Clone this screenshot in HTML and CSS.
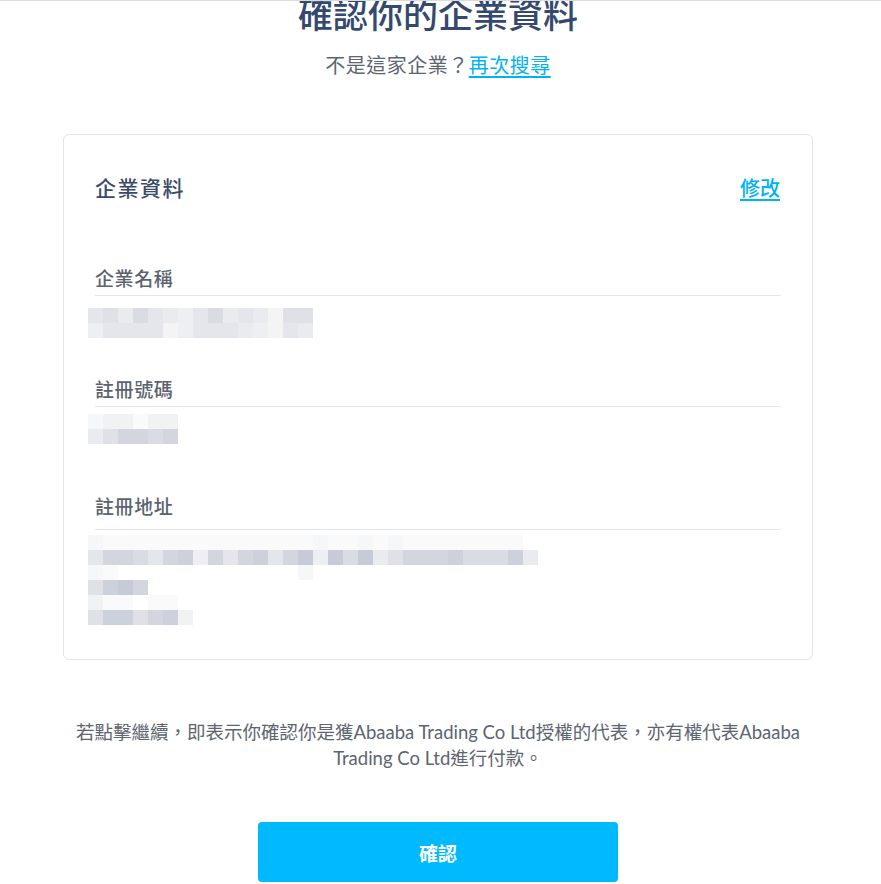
FILE: index.html
```html
<!DOCTYPE html>
<html lang="zh-Hant">
<head>
<meta charset="utf-8">
<title>確認你的企業資料</title>
<link rel="stylesheet" href="styles.css">
</head>
<body>
<div class="page">
  <h1 class="title">確認你的企業資料</h1>
  <p class="subtitle">不是這家企業？<a href="#" class="link">再次搜尋</a></p>

  <section class="card">
    <div class="card-head">
      <h2 class="card-title">企業資料</h2>
      <a href="#" class="link edit">修改</a>
    </div>

    <div class="field field-name">
      <div class="label">企業名稱</div>
      <div class="blur blur-name">
        <div class="brow"><i class="p3"></i><i class="p4"></i><i class="p2"></i><i class="p5"></i><i class="p3"></i><i class="p2"></i><i class="p1"></i><i class="p3"></i><i class="p5"></i><i class="p2"></i><i class="p3"></i><i class="p2"></i><i class="p0"></i><i class="p4"></i><i class="p4"></i></div>
        <div class="brow"><i class="p1"></i><i class="p3"></i><i class="p3"></i><i class="p3"></i><i class="p3"></i><i class="p0"></i><i class="p1"></i><i class="p3"></i><i class="p3"></i><i class="p3"></i><i class="p2"></i><i class="p1"></i><i class="p0"></i><i class="p3"></i><i class="p2"></i></div>
      </div>
    </div>

    <div class="field field-number">
      <div class="label">註冊號碼</div>
      <div class="blur">
        <div class="brow"><i class="f1"></i><i class="f2"></i><i class="f2"></i><i class="f0"></i><i class="f2"></i><i class="f2"></i></div>
        <div class="brow"><i class="p2"></i><i class="p4"></i><i class="p6"></i><i class="p6"></i><i class="p5"></i><i class="p6"></i></div>
      </div>
    </div>

    <div class="field">
      <div class="label label-address">註冊地址</div>
      <div class="blur blur-address">
        <div class="brow"><i class="f1"></i><i class="f0"></i><i class="f0"></i><i class="f0"></i><i class="f0"></i><i class="f0"></i><i class="f0"></i><i class="f0"></i><i class="f0"></i><i class="f0"></i><i class="f0"></i><i class="f0"></i><i class="f0"></i><i class="f0"></i><i class="f0"></i><i class="f1"></i><i class="f0"></i><i class="f0"></i><i class="f1"></i><i class="f0"></i><i class="f1"></i><i class="f0"></i><i class="f0"></i><i class="f0"></i><i class="f0"></i><i class="f0"></i><i class="f0"></i><i class="f0"></i><i class="f0"></i><i class="w"></i></div>
        <div class="brow"><i class="p3"></i><i class="p6"></i><i class="p6"></i><i class="p5"></i><i class="p3"></i><i class="p6"></i><i class="p7"></i><i class="p1"></i><i class="p6"></i><i class="p3"></i><i class="p6"></i><i class="p7"></i><i class="p3"></i><i class="p6"></i><i class="p8"></i><i class="p1"></i><i class="p8"></i><i class="p5"></i><i class="p8"></i><i class="p2"></i><i class="p4"></i><i class="p6"></i><i class="p6"></i><i class="p6"></i><i class="p7"></i><i class="p5"></i><i class="p5"></i><i class="p5"></i><i class="p7"></i><i class="p2"></i></div>
        <div class="brow"><i class="f1"></i><i class="f0"></i><i class="w"></i><i class="w"></i><i class="w"></i><i class="w"></i><i class="w"></i><i class="w"></i><i class="w"></i><i class="w"></i><i class="w"></i><i class="w"></i><i class="w"></i><i class="w"></i><i class="f1"></i></div>
        <div class="brow"><i class="p4"></i><i class="p7"></i><i class="p8"></i><i class="p6"></i></div>
        <div class="brow"><i class="f2"></i><i class="f0"></i><i class="f0"></i><i class="w"></i><i class="f0"></i><i class="f0"></i><i class="w"></i></div>
        <div class="brow"><i class="p4"></i><i class="p7"></i><i class="p7"></i><i class="p4"></i><i class="p6"></i><i class="p7"></i><i class="f2"></i></div>
      </div>
    </div>
  </section>

  <p class="notice">若點擊繼續，即表示你確認你是獲Abaaba Trading Co Ltd授權的代表，亦有權代表Abaaba Trading Co Ltd進行付款。</p>

  <button class="confirm" type="button">確認</button>
</div>
</body>
</html>
```

FILE: styles.css
```css
* { box-sizing: border-box; }

html, body {
  margin: 0;
  padding: 0;
  background: #ffffff;
}

body {
  font-family: Lato, "Noto Sans CJK TC", "Noto Sans", sans-serif;
  color: #5d6570;
  border-top: 1px solid #dcdcdc;
  overflow: hidden;
}

.page {
  width: 876px;
  display: flex;
  flex-direction: column;
  align-items: center;
}

.title {
  margin: -13px 0 0;
  font-size: 35px;
  line-height: 52px;
  font-weight: 500;
  color: #34496f;
  text-align: center;
}

.subtitle {
  margin: 11px 0 0;
  font-size: 20px;
  line-height: 28px;
  color: #5d6570;
  letter-spacing: 0.5px;
}

.link {
  color: #00b3f2;
  text-decoration: underline;
  text-underline-offset: 3px;
  text-decoration-thickness: 2px;
}

.card {
  margin-top: 55px;
  width: 750px;
  border: 1px solid #e2e5e9;
  border-radius: 6px;
  padding: 38px 31px 34px;
}

.card-head {
  display: flex;
  justify-content: space-between;
  align-items: center;
  margin-bottom: 62px;
}

.card-title {
  margin: 0;
  font-size: 21px;
  line-height: 30px;
  font-weight: 500;
  color: #3b4a69;
  letter-spacing: 1.5px;
}

.edit {
  font-size: 20px;
  line-height: 30px;
  font-weight: 500;
  margin-right: 1px;
}

.field { margin-bottom: 49px; }
.field-name { margin-bottom: 38px; }
.field:last-child { margin-bottom: 0; }

.label {
  font-size: 19px;
  line-height: 28px;
  font-weight: 500;
  color: #5b636e;
  letter-spacing: 0.6px;
  padding-bottom: 2px;
  border-bottom: 1px solid #e3e6ea;
}
.label-address { padding-bottom: 8px; }

.blur {
  margin: 7px 0 0 -7px;
  display: flex;
  flex-direction: column;
}
.blur-name { margin-top: 12px; }
.blur-address { margin-top: 5px; }

.brow { display: flex; }
.brow i {
  display: block;
  width: 15px;
  height: 15px;
}

.w  { background: #ffffff; }
.f0 { background: #fafafb; }
.f1 { background: #f6f7f8; }
.f2 { background: #f1f2f4; }
.p0 { background: #f4f4f5; }
.p1 { background: #eeeff2; }
.p2 { background: #e9ebef; }
.p3 { background: #e5e6eb; }
.p4 { background: #dfe1e7; }
.p5 { background: #d9dce3; }
.p6 { background: #d3d6df; }
.p7 { background: #cdd1dc; }
.p8 { background: #c6cbd7; }

.notice {
  margin: 59px 0 0;
  width: 740px;
  font-size: 18.5px;
  line-height: 26px;
  text-align: center;
  color: #5d6570;
}

.confirm {
  margin-top: 51px;
  width: 360px;
  height: 60px;
  border: 0;
  border-radius: 4px;
  background: #00b9ff;
  color: #ffffff;
  font-family: Lato, "Noto Sans CJK TC", sans-serif;
  font-size: 19px;
  font-weight: 700;
}
```
